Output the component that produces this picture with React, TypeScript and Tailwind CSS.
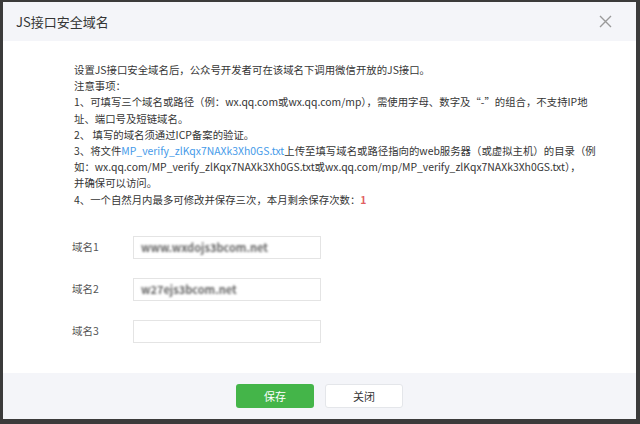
// JS接口安全域名 dialog

const fontStack = 'font-["Microsoft_YaHei","Noto_Sans_CJK_SC",sans-serif]'

interface DomainRow {
  label: string
  value: string
}

const rows: DomainRow[] = [
  { label: '域名1', value: 'www.wxdojs3bcom.net' },
  { label: '域名2', value: 'w27ejs3bcom.net' },
  { label: '域名3', value: '' },
]

const fileName = 'MP_verify_zlKqx7NAXk3Xh0GS.txt'

function CloseIcon() {
  return (
    <svg width="13" height="13" viewBox="0 0 13 13" fill="none">
      <path d="M1 1L12 12M12 1L1 12" stroke="#9a9a9a" strokeWidth="1.4" />
    </svg>
  )
}

export default function App() {
  return (
    <div className={`w-[640px] h-[424px] bg-[#3b3b3b] pt-[2px] pl-[3px] pr-[4px] pb-[5px] ${fontStack}`}>
      <div className="flex h-full flex-col bg-white">
        <div className="flex h-[39px] shrink-0 items-center justify-between bg-[#f4f5f9] pl-[13px] pr-[24px]">
          <span className="text-[13px] text-[#353535]">JS接口安全域名</span>
          <CloseIcon />
        </div>

        <div className="flex-1 pl-[71px] pt-[21px]">
          <div className="whitespace-nowrap text-[10.4px] leading-[16.2px] text-[#353535]">
            <p>设置JS接口安全域名后，公众号开发者可在该域名下调用微信开放的JS接口。</p>
            <p>注意事项：</p>
            <p>1、可填写三个域名或路径（例：wx.qq.com或wx.qq.com/mp），需使用字母、数字及“-”的组合，不支持IP地</p>
            <p>址、端口号及短链域名。</p>
            <p>2、 填写的域名须通过ICP备案的验证。</p>
            <p>
              3、将文件<span className="text-[#459ae9]">{fileName}</span>上传至填写域名或路径指向的web服务器（或虚拟主机）的目录（例
            </p>
            <p>如：wx.qq.com/{fileName}或wx.qq.com/mp/{fileName}），</p>
            <p>并确保可以访问。</p>
            <p>
              4、一个自然月内最多可修改并保存三次，本月剩余保存次数：<span className="font-bold text-[#e15f63]">1</span>
            </p>
          </div>

          <div className="mt-[28px] flex flex-col gap-[19px]">
            {rows.map((row) => (
              <div key={row.label} className="flex items-center">
                <span className="-ml-[2px] w-[61px] text-[10.5px] text-[#555]">{row.label}</span>
                <div className="flex h-[23px] w-[188px] items-center border border-[#e4e4e4] px-[7px]">
                  <span className="inline-block [filter:blur(1.2px)] text-[11px] font-bold text-[#666]">{row.value}</span>
                </div>
              </div>
            ))}
          </div>
        </div>

        <div className="flex h-[46px] shrink-0 items-center justify-center gap-[11px] bg-[#f4f5f9]">
          <button className="h-[24px] w-[78px] rounded-[3px] bg-[#44b549] text-[11px] text-white">保存</button>
          <button className="h-[24px] w-[78px] rounded-[3px] border border-[#e4e6ea] bg-white text-[11px] text-[#353535]">关闭</button>
        </div>
      </div>
    </div>
  )
}
